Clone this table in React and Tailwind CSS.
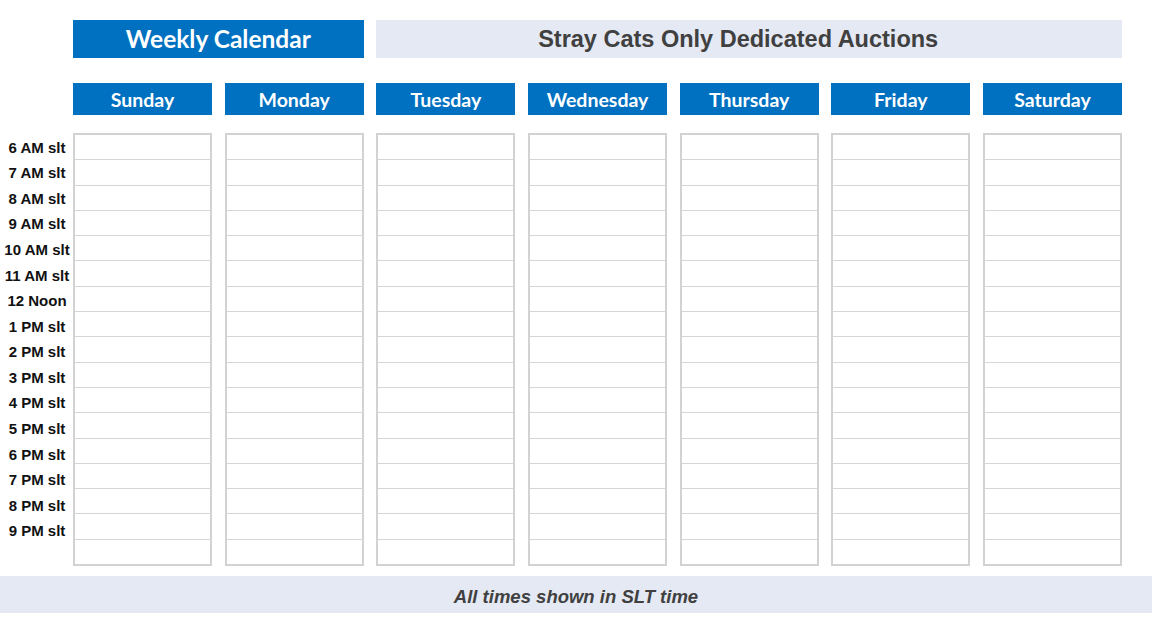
import React from "react";

const DAYS = ["Sunday", "Monday", "Tuesday", "Wednesday", "Thursday", "Friday", "Saturday"];
const TIMES = [
  "6 AM slt", "7 AM slt", "8 AM slt", "9 AM slt", "10 AM slt", "11 AM slt", "12 Noon",
  "1 PM slt", "2 PM slt", "3 PM slt", "4 PM slt", "5 PM slt", "6 PM slt", "7 PM slt",
  "8 PM slt", "9 PM slt", "",
];

const headFont = { fontFamily: "Lato, 'Open Sans', sans-serif" };

const App = () => {
  return (
    <div className="w-[1152px] h-[624px] bg-white overflow-hidden" style={{ fontFamily: "'Liberation Sans', Arial, sans-serif" }}>
      <div className="pl-[73px] w-[1122px]">
        <div className="grid grid-cols-7 gap-x-[12.67px] mt-[20px] h-[38px]">
          <div className="col-span-2 bg-[#0070c0] flex items-center justify-center text-white text-[24.5px] font-bold" style={headFont}>
            Weekly Calendar
          </div>
          <div className="col-span-5 bg-[#e4e9f3] flex items-center justify-center text-[#404040] text-[23.5px] font-bold pr-[22px] pt-[2px]">
            Stray Cats Only Dedicated Auctions
          </div>
        </div>
        <div className="grid grid-cols-7 gap-x-[12.67px] mt-[25px] h-[32px]">
          {DAYS.map((d) => (
            <div key={d} className="bg-[#0070c0] flex items-center justify-center text-white text-[19.5px] font-bold pt-[1px]" style={headFont}>
              {d}
            </div>
          ))}
        </div>
      </div>

      <div className="flex mt-[18px] h-[433px]">
        <div className="w-[73px] flex flex-col pt-[2px]">
          {TIMES.map((t, i) => (
            <div key={i} className="h-[25.6px] shrink-0 flex items-center justify-center text-[15px] font-bold text-[#111] pl-[1px]">
              {t}
            </div>
          ))}
        </div>
        <div className="grid grid-cols-7 gap-x-[12.67px] w-[1049px]">
          {DAYS.map((d) => (
            <div key={d} className="border-2 border-[#d2d2d2] flex flex-col">
              {TIMES.map((t, i) => (
                <div key={i} className={"flex-1 " + (i > 0 ? "border-t border-[#d6d6d6]" : "")} />
              ))}
            </div>
          ))}
        </div>
      </div>

      <div className="mt-[10px] h-[37px] bg-[#e4e9f3] flex items-center justify-center text-[#404040] text-[18.5px] font-bold italic pt-[4px]">
        All times shown in SLT time
      </div>
    </div>
  );
};

export default App;
